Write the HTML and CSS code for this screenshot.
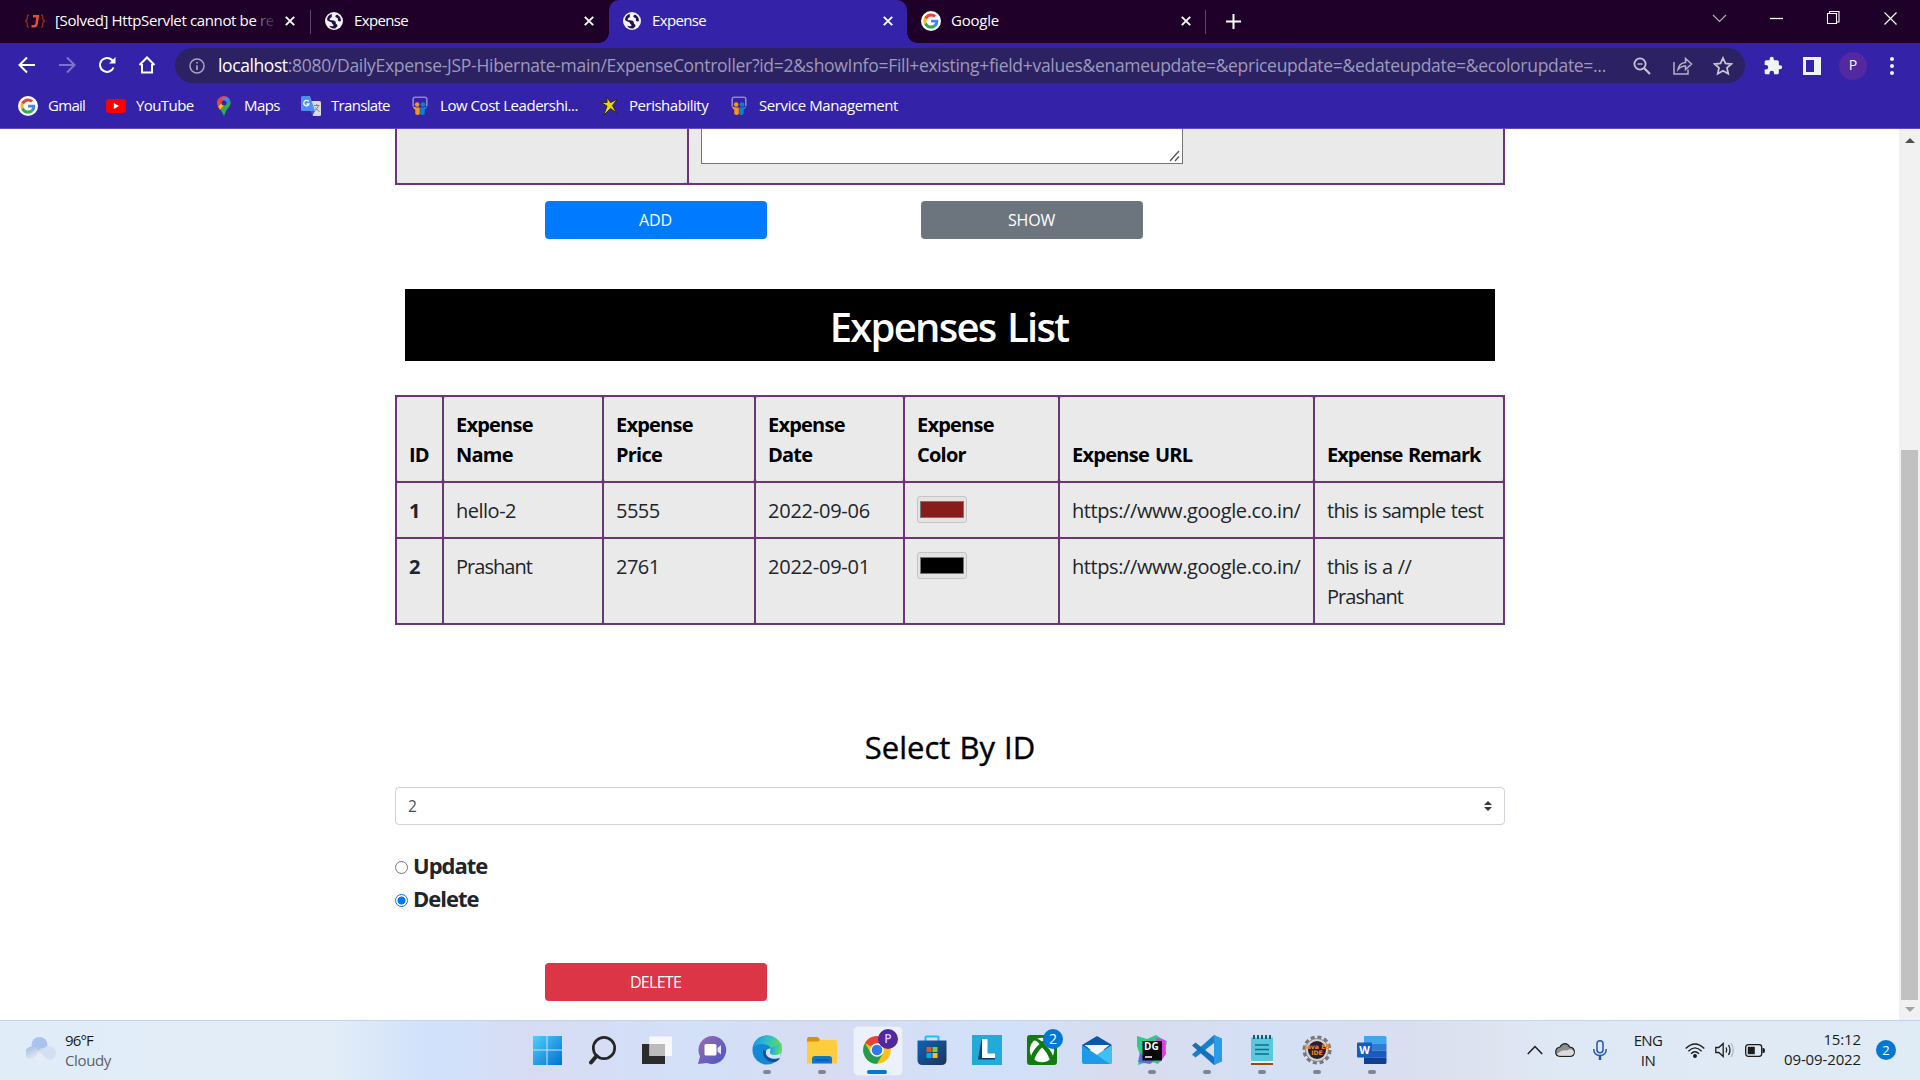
FILE: index.html
```html
<!DOCTYPE html>
<html lang="en">
<head>
<meta charset="utf-8">
<title>Expense</title>
<link rel="stylesheet" href="styles.css">
</head>
<body>
<svg class="defs" width="0" height="0" aria-hidden="true">
  <symbol id="google" viewBox="0 0 20 20"><circle cx="10" cy="10" r="10" fill="#fff"/><g transform="translate(2.4 2.4) scale(.317)"><path fill="#EA4335" d="M24 9.5c3.54 0 6.71 1.22 9.21 3.6l6.85-6.85C35.9 2.38 30.47 0 24 0 14.62 0 6.51 5.38 2.56 13.22l7.98 6.19C12.43 13.72 17.74 9.5 24 9.5z"/><path fill="#4285F4" d="M46.98 24.55c0-1.57-.15-3.09-.38-4.55H24v9.02h12.94c-.58 2.96-2.26 5.48-4.78 7.18l7.73 6c4.51-4.18 7.09-10.36 7.09-17.65z"/><path fill="#FBBC05" d="M10.53 28.59c-.48-1.45-.76-2.99-.76-4.59s.27-3.14.76-4.59l-7.98-6.19C.92 16.46 0 20.12 0 24c0 3.88.92 7.54 2.56 10.78l7.97-6.19z"/><path fill="#34A853" d="M24 48c6.48 0 11.93-2.13 15.89-5.81l-7.73-6c-2.15 1.45-4.92 2.3-8.16 2.3-6.26 0-11.57-4.22-13.47-9.91l-7.98 6.19C6.51 42.62 14.62 48 24 48z"/></g></symbol>
  <symbol id="globe" viewBox="0 0 18 18"><circle cx="9" cy="9" r="9" fill="#f1f3f4"/><path class="globe-land" d="M7 1.8C6.2 3.500 7.500 4 6.500 5.300 5.600 6.300 4.700 6 4.600 7.300c0 1.300 2 1 3.800 1.200 2 .2 2.200 1.200 2.300 2.300.1 1.700 2 1.300 1.700 3.100-.2 1-1.500 1.600-2.100 2.500-3 .6-5.400-1-6-2.600 1.500.6 4.300.8 4.200-.6-.1-1.200-1.400-1-1.600-2.300C6.700 9.700 4 9.800 2 8 2 5 4 2.600 7 1.800zM12 2.500c2.500 1.300 4 3.600 4 6.300-.8 1.200-2.400 1-3-.2-.5-1 .4-1.900-.4-2.700-.8-.7-2-.3-2.200-1.500-.1-.9.900-1.200 1.600-1.900z"/></symbol>
  <symbol id="close" viewBox="0 0 10 10"><path d="M.8.8l8.400 8.400M9.200.8L.8 9.200" fill="none" stroke="#fff" stroke-width="1.900"/></symbol>
  <symbol id="slides" viewBox="0 0 16 20"><path d="M1.200 10V3Q1.200 1.200 3 1.200H13q1.800 0 1.800 1.800v7" fill="none" stroke="#8d86c4" stroke-width="1.600"/><circle cx="5.200" cy="8.500" r="2.300" fill="#f7941e"/><circle cx="11" cy="8.500" r="2.300" fill="#0a84c6"/><path d="M.5 9.500c2 2 4 2 7.300 2V18q-2 2-4.500 0V14Q1 12.500.5 9.500z" fill="#f7941e"/><path d="M15.500 9.500c-2 2-4 2-7.300 2V18q2 2 4.500 0V14q2.300-1.500 2.800-4.500z" fill="#0a84c6"/></symbol>
</svg>

<header class="tabs">
  <div class="tab tab-first">
    <svg class="fav-j" viewBox="0 0 20 14"><g fill="none"><path d="M4 1Q2 1 2.300 3.500T.6 7q2 .6 1.700 3.500T4 13M16 1q2 0 1.700 2.500T19.400 7q-2 .6-1.700 3.500T16 13" stroke="#8c2a22" stroke-width="1.400"/><path d="M8 2.200H12.800L11.500 10q-.5 2.200-2.500 2.200H6.500" stroke="#e4502e" stroke-width="2.600"/></g></svg>
    <span class="tab-title tab-title-long">[Solved] HttpServlet cannot be <span class="fade">re</span></span>
    <svg class="x"><use href="#close"/></svg>
  </div>
  <div class="tab">
    <svg class="fav"><use href="#globe"/></svg><span class="tab-title">Expense</span><svg class="x"><use href="#close"/></svg>
  </div>
  <div class="tab active">
    <svg class="fav"><use href="#globe"/></svg><span class="tab-title">Expense</span><svg class="x"><use href="#close"/></svg>
  </div>
  <div class="tab tab-last">
    <svg class="fav-g"><use href="#google"/></svg><span class="tab-title google-title">Google</span><svg class="x"><use href="#close"/></svg>
  </div>
  <svg class="plus" viewBox="0 0 15 15"><path d="M7.500 0v15M0 7.500h15" stroke="#fff" stroke-width="2"/></svg>
  <svg class="window-controls" viewBox="0 0 190 16" fill="none" stroke="#fff"><path d="M2 5l6.500 6.500L15 5" stroke="#b9a9bf" stroke-width="1.200"/><path d="M59 8.500h13" stroke-width="1.300"/><path d="M116.500 3.500h9v10h-9zM118.500 3.500v-2h9.500v10.500h-2.500" stroke-width="1.100"/><path d="M173.500 2.500l12 12M185.500 2.500l-12 12" stroke-width="1.200"/></svg>
</header>

<nav class="toolbar">
  <div class="nav-icons">
    <svg viewBox="0 0 18 18"><path d="M17 9H2M9 1.500L1.500 9 9 16.500" /></svg>
    <svg viewBox="0 0 18 18" class="dim"><path d="M1 9h15M9 1.500L16.500 9 9 16.500"/></svg>
    <svg viewBox="0 0 18 18"><path d="M15.500 11.500A7 7 0 1 1 14 4l1.800 1.800"/><path d="M17.500 1v6.500H11z" fill="#fff" stroke="none"/></svg>
    <svg viewBox="0 0 18 18"><path d="M1.500 9L9 1.500 16.500 9M4 8v8.500h10V8"/></svg>
  </div>
  <div class="omnibox">
    <svg class="info" viewBox="0 0 16 16" fill="none" stroke="#a8a4bd" stroke-width="1.500"><circle cx="8" cy="8" r="7"/><path d="M8 7.200V12M8 4v1.600" stroke-width="1.700"/></svg>
    <div class="url"><b>localhost</b><span>:8080/DailyExpense-JSP-Hibernate-main/ExpenseController?id=2&amp;showInfo=Fill+existing+field+values&amp;enameupdate=&amp;epriceupdate=&amp;edateupdate=&amp;ecolorupdate=...</span></div>
    <svg class="zoom-out" viewBox="0 0 18 18" fill="none" stroke="#c6c4cf" stroke-width="1.800"><circle cx="7" cy="7" r="5.600"/><path d="M11 11l6 6" stroke-width="2.200"/><path d="M4.500 7h5" stroke-width="1.400"/></svg>
    <svg class="share" viewBox="0 0 20 18" fill="none" stroke="#b5b2c4" stroke-width="1.500"><path d="M1 5v12h14v-4.500"/><path d="M5 12.500Q6 6 12.500 5.500V1.500L18.500 7l-6 5.500V9Q8 9 5 12.500z"/></svg>
    <svg class="star" viewBox="0 0 18 18" fill="none" stroke="#c6c4cf" stroke-width="1.600"><path d="M9 1.800l2.200 4.800 5.300.6-3.900 3.500 1.100 5.200L9 13.200l-4.700 2.700 1.100-5.200L1.500 7.200l5.300-.6z"/></svg>
  </div>
  <svg class="ext" viewBox="0 0 24 24" fill="#f1f3f4"><path d="M20.500 11H19V7c0-1.100-.9-2-2-2h-4V3.500a2.500 2.500 0 0 0-5 0V5H4c-1.100 0-2 .9-2 2v3.800h1.500a2.700 2.700 0 0 1 0 5.400H2V20c0 1.100.9 2 2 2h3.800v-1.500a2.700 2.700 0 0 1 5.400 0V22H17c1.100 0 2-.9 2-2v-4h1.500a2.500 2.500 0 0 0 0-5z"/></svg>
  <svg class="panel" viewBox="0 0 18 18"><path d="M1.500 1.500h15v15h-15z" fill="none" stroke="#f1f3f4" stroke-width="3"/><path d="M11 1h6v16h-6z" fill="#f1f3f4"/></svg>
  <div class="profile">P</div>
  <svg class="kebab" viewBox="0 0 4 18" fill="#f1f3f4"><circle cx="2" cy="2" r="2"/><circle cx="2" cy="9" r="2"/><circle cx="2" cy="16" r="2"/></svg>
</nav>

<nav class="bookmarks">
  <a class="bm bm-gmail"><svg width="20" height="20"><use href="#google"/></svg><span>Gmail</span></a>
  <a class="bm bm-yt"><svg width="20" height="14" viewBox="0 0 20 14"><rect width="20" height="14" rx="3.500" fill="#f00"/><path d="M7.800 4v6L13 7z" fill="#fff"/></svg><span>YouTube</span></a>
  <a class="bm bm-maps"><svg width="14" height="20" viewBox="0 0 14 20"><path d="M7 0a7 7 0 0 0-5.400 2.500L7 7z" fill="#ea4335"/><path d="M1.600 2.500A7 7 0 0 0 1 10.500L10.500 1Q8.800 0 7 0z" fill="#ea4335"/><path d="M5 1.500L10 .7A7 7 0 0 1 13 4L7.500 9z" fill="#4285f4"/><path d="M1 10.500L5 6.500l3 2.500-5 5z" fill="#fbbc04"/><path d="M13 4c2 4.500-1 7-3 9.500-1.700 2.300-1.700 4-3 6.500-1.300-2.500-1.300-3.500-4-6.500z" fill="#34a853"/><circle cx="7" cy="7" r="2.500" fill="#3423a8"/></svg><span>Maps</span></a>
  <a class="bm bm-tr"><svg width="20" height="20" viewBox="0 0 20 20"><path d="M8 5h10.500q1.500 0 1.500 1.500V19q0 1-1.500 1H12z" fill="#d9dce3"/><path d="M1.500 0H9l5 15H1.500Q0 15 0 13.500v-12Q0 0 1.500 0z" fill="#4f8df5"/><path d="M9.500 15H14l-2.500 4.500z" fill="#2b5fc0"/><path d="M7.600 5.500A2.700 2.700 0 1 0 8 8H5.500" fill="none" stroke-width="1.300" stroke="#fff"/><path d="M13 9.500h5.500M15.700 8v1.500M17.500 9.500q-1 3.500-3.500 5M14.500 11.500q1.500 3 4 4" fill="none" stroke="#7a8290"/></svg><span>Translate</span></a>
  <a class="bm bm-low"><svg width="16" height="20"><use href="#slides"/></svg><span>Low Cost Leadershi...</span></a>
  <a class="bm bm-per"><svg width="18" height="20" viewBox="0 0 18 20"><path d="M7 1l3.500 5.500L17.500 3 12.500 9.500l4 7.500-6-4.500L3.500 19.500l3.500-9.500L.5 6.200l6.500.3z" fill="#e8d413" stroke="#2d260c" stroke-width="1"/></svg><span>Perishability</span></a>
  <a class="bm bm-ser"><svg width="16" height="20"><use href="#slides"/></svg><span>Service Management</span></a>
</nav>

<div class="viewport">
  <main class="page">
    <div class="form-tail">
      <div class="form-label"></div>
      <div class="form-field"><div class="textarea"><svg viewBox="0 0 12 12"><path d="M1 11L10 1M6 11l4-4.500" stroke="#555" stroke-width="1.300"/></svg></div></div>
    </div>
    <div class="actions"><button class="btn primary">ADD</button><button class="btn secondary">SHOW</button></div>
    <h1>Expenses List</h1>
    <table>
      <colgroup><col class="c1"><col class="c2"><col class="c3"><col class="c4"><col class="c5"><col class="c6"><col class="c7"></colgroup>
      <thead><tr><th>ID</th><th>Expense<br>Name</th><th>Expense<br>Price</th><th>Expense<br>Date</th><th>Expense<br>Color</th><th>Expense URL</th><th>Expense Remark</th></tr></thead>
      <tbody>
        <tr><th>1</th><td>hello-2</td><td>5555</td><td class="num">2022-09-06</td><td><div class="color"><i class="red"></i></div></td><td class="link">https://www.google.co.in/</td><td>this is sample test</td></tr>
        <tr><th>2</th><td class="name">Prashant</td><td>2761</td><td class="num">2022-09-01</td><td><div class="color"><i class="black"></i></div></td><td class="link">https://www.google.co.in/</td><td>this is a //<br><span class="name">Prashant</span></td></tr>
      </tbody>
    </table>
    <h2>Select By ID</h2>
    <div class="select"><span>2</span><svg viewBox="0 0 8 10" width="8" height="10"><path d="M4 0l4 4H0zM4 10L0 6h8z" fill="#343a40"/></svg></div>
    <div class="radios">
      <label><i class="radio"></i><span>Update</span></label>
      <label><i class="radio on"></i><span>Delete</span></label>
    </div>
    <button class="btn danger">DELETE</button>
  </main>
  <div class="scrollbar">
    <svg viewBox="0 0 10 5"><path d="M5 0l5 5H0z" fill="#505050"/></svg>
    <div class="thumb"></div>
    <svg viewBox="0 0 10 5"><path d="M0 0h10L5 5z" fill="#a3a3a3"/></svg>
  </div>
</div>

<footer class="taskbar">
  <div class="weather">
    <svg width="30" height="24" viewBox="0 0 30 24"><defs><linearGradient id="cl" x1="0" y1="0" x2="1" y2="1"><stop offset="0" stop-color="#9fb9e0"/><stop offset=".7" stop-color="#eceff8"/></linearGradient></defs><circle cx="13.500" cy="8" r="8" fill="#aac3ec"/><path d="M6 9.500a6 6 0 0 1 6 4 6.500 6.500 0 1 1 11.500 9.500H6a6.700 6.700 0 0 1 0-13.500z" fill="url(#cl)"/><circle cx="23" cy="16" r="7" fill="#d3dff3"/><path d="M12 15q3 0 5 3 2 3 6 5H8z" fill="#e6ecf7"/></svg>
    <div><div class="temp">96°F</div><div class="sky">Cloudy</div></div>
  </div>

  <div class="apps">
    <div class="app"><svg viewBox="0 0 30 30"><defs><linearGradient id="wn" x1="0" y1="0" x2="1" y2="1"><stop offset="0" stop-color="#4fd0fb"/><stop offset="1" stop-color="#0070d2"/></linearGradient></defs><path d="M1 1h13.500v13.500H1zM15.500 1H30v13.500H15.500zM1 15.500h13.500V30H1zM15.500 15.500H30V30H15.500z" fill="url(#wn)"/></svg></div>
    <div class="app"><svg viewBox="0 0 30 30" fill="none" stroke="#262626"><circle cx="17" cy="13" r="10.700" stroke-width="2.700"/><path d="M9.500 21L4 27.500" stroke-width="4" stroke-linecap="round"/></svg></div>
    <div class="app"><svg viewBox="0 0 30 30"><path d="M0 9h23v20H0z" fill="#2c2c2c"/><path d="M7.500 1.500H30V21H7.500z" fill="#f8f8f8"/><path d="M7.500 9H23v12H7.500z" fill="#bcbcbc"/></svg></div>
    <div class="app"><svg viewBox="0 0 30 30"><defs><linearGradient id="ch" x1="0" y1="0" x2="1" y2="1"><stop offset="0" stop-color="#9a6cae"/><stop offset="1" stop-color="#4a55c8"/></linearGradient></defs><path d="M15 1a14 14 0 1 1-5 27l-9 1 2-7.500A14 14 0 0 1 15 1z" fill="url(#ch)"/><rect x="7.500" y="9" width="12" height="11.500" rx="1.500" fill="#fff"/><path d="M20.500 13l3.500-3v9.500l-3.500-3z" fill="#e6e2ff"/></svg></div>
    <div class="app run"><svg viewBox="0 0 30 30"><defs><linearGradient id="ed" x1="0" y1="0" x2="1" y2=".3"><stop offset="0" stop-color="#1b8fd6"/><stop offset=".5" stop-color="#2bbdd0"/><stop offset="1" stop-color="#62dc4f"/></linearGradient></defs><circle cx="15" cy="15" r="14.500" fill="#1388d8"/><path d="M.5 13C2 5 8 .5 15 .5c8 0 15 6 15 13 0 4-3 6.500-7 6.500-3 0-5-1-5-2.500 0-1 1-1.500 1-3 0-2.500-2-4.500-5-5C9 8.500 3 9 .5 13z" fill="url(#ed)"/><path d="M11 15c-1 7 5 13 12 12 2-.5 4-2 5-4-6 3-14 0-13.500-7z" fill="#11509a"/><path d="M18 17.500c0 1.500 2 2.500 5 2.500 2.500 0 4.500-1 6-2.500l-1 5q-6 2.500-11 0-4-2.500-3-6.500 1-3 4.500-2.500 1 1.500-.5 4z" fill="#d5e2f9"/><path d="M18 17.500c0 1.500 2 2.500 5 2.500 3 0 5.500-1.500 6.500-4V8L19 13z" fill="url(#ed)"/></svg></div>
    <div class="app run"><svg viewBox="0 0 30 30"><path d="M0 4q0-2 2-2h8.500L13 4.500V8H0z" fill="#d79208"/><path d="M0 6.500h11l2-1.500h15q2 0 2 2v21.500H0z" fill="#fdcc3f"/><path d="M5 28.500V24q0-3 3-3h14q3 0 3 3v4.500z" fill="#0f76c8"/><path d="M8.500 25h13" stroke="#084d90" stroke-width="1.200"/></svg></div>
    <div class="app chrome"><svg viewBox="0 0 30 30"><circle cx="15" cy="15" r="13.800" fill="#fbc116"/><path d="M15 15L3 8.100A13.800 13.800 0 0 1 27 8.100H15z" fill="#e94435"/><path d="M3 8.100A13.800 13.800 0 0 0 15 28.800l6-10.300-12-.1z" fill="#249c4f"/><circle cx="15" cy="15" r="6.800" fill="#fff"/><circle cx="15" cy="15" r="5.300" fill="#3178e8"/></svg><b class="badge badge-p">P</b></div>
    <div class="app"><svg viewBox="0 0 30 30"><defs><linearGradient id="st" x1="0" y1="0" x2="1" y2="1"><stop offset="0" stop-color="#0d64b8"/><stop offset="1" stop-color="#203158"/></linearGradient></defs><path d="M8.500 6.500v-4q0-1 1-1h11q1 0 1 1v4" fill="none" stroke="#22bdf3" stroke-width="2"/><path d="M.5 5.500h29V25q0 5-5 5h-19q-5 0-5-5z" fill="url(#st)"/><path d="M9.500 12H14.500v5h-5z" fill="#f1511b"/><path d="M15.500 12h5v5h-5z" fill="#80cc28"/><path d="M9.500 18h5v5h-5z" fill="#00adef"/><path d="M15.500 18h5v5h-5z" fill="#fbbc09"/></svg></div>
    <div class="app"><svg viewBox="0 0 30 30"><path d="M0 0h30v30H0z" fill="#22aad8"/><path d="M9.500 4L6 24.500l17 0V20l-11 1z" fill="#0a3e73"/><path d="M10 4h5.500v14.500H23V23H10z" fill="#fff"/></svg></div>
    <div class="app"><svg viewBox="0 0 30 30"><rect width="30" height="30" rx="3" fill="#107c10"/><circle cx="15" cy="15" r="12.200" fill="#fff"/><path d="M8 3.500Q12 3.500 15 6.500q3-3 7-3l2 1.500Q20 5.500 17.500 9 24 15 26 21q-1 3-3 4Q20 17 15 12.500 10 17 7 25q-2-1-3-4Q6 15 12.500 9 10 5.500 6 5z" fill="#107c10"/></svg><b class="badge">2</b></div>
    <div class="app"><svg viewBox="0 0 30 30"><path d="M0 10L15 1l15 9v5H0z" fill="#0c58a8"/><path d="M2.500 10h25L15 20z" fill="#f5f5f5"/><path d="M0 10l15 10L30 10v17q0 2-2 2H2q-2 0-2-2z" fill="#1c9be8"/><path d="M30 10v17q0 2-2 2L13 18.700l2 1.300z" fill="#3fc1f5"/></svg></div>
    <div class="app run"><svg viewBox="0 0 30 30"><path d="M0 1l10 3 9-4 8 5 3 1-3 16-6 7-8-3-12 4 2-10-3-9z" fill="#2fc98a"/><path d="M19 3l9 2 1 14-6 8z" fill="#d63fe0"/><path d="M1 27l2-9 14 8-4 3z" fill="#5b6fe0"/><path d="M5.500 6H25v19.500H5.500z" fill="#0a0a0a"/><text x="7" y="15" class="dg">DG</text><path d="M8 22h7" stroke="#fff" stroke-width="1.500"/></svg></div>
    <div class="app run"><svg viewBox="0 0 30 30"><path d="M22 0l8 3.500v23L22 30z" fill="#2a9be6"/><path d="M22 0v8L3.500 22.500 0 19.500z" fill="#1c7fca"/><path d="M22 30v-8L3.500 7.500 0 10.500z" fill="#1272bd"/><path d="M22 0l1.500.6v28.800L22 30z" fill="#2a9be6"/></svg></div>
    <div class="app run"><svg viewBox="0 0 30 30"><path d="M4 28h22v2H4z" fill="#9a4a10"/><path d="M4 2.500h22V26H4z" fill="#59c8dc"/><path d="M4 26h22v1.500H4z" fill="#fff"/><path d="M7 0v4M11 0v4M15 0v4M19 0v4M23 0v4" stroke="#0d5c7c" stroke-width="2"/><path d="M8 10h14M8 14.500h14M8 19h14" stroke="#0d6d90" stroke-width="1.500"/></svg></div>
    <div class="app run"><svg viewBox="0 0 30 30"><circle cx="15" cy="15" r="12.800" fill="none" stroke="#77777b" stroke-width="3.500" stroke-dasharray="4 2.700"/><circle cx="15" cy="15" r="11.500" fill="#d2d2d2" stroke="#777" stroke-width=".8"/><circle cx="15" cy="15" r="9" fill="#241f33"/><text x="15" y="14" class="ee">Java EE</text><text x="15" y="20" class="ee">IDE</text></svg></div>
    <div class="app run"><svg viewBox="0 0 30 30"><path d="M7 1h21q1.500 0 1.500 1.500V8.500H7z" fill="#41a5ee"/><path d="M7 8.500h22.500v7H7z" fill="#2b7cd3"/><path d="M7 15.500h22.500v7H7z" fill="#185abd"/><path d="M7 22.500h22.500v5q0 1.500-1.500 1.500H7z" fill="#103f91"/><rect y="7.500" width="15" height="15" rx="1" fill="#185abd"/><text x="7.500" y="19" class="wd">W</text></svg></div>
  </div>

  <div class="tray">
    <svg class="t-chev" viewBox="0 0 16 10"><path d="M.8 9L8 1.500 15.200 9" fill="none" stroke="#1c1c1c" stroke-width="1.500"/></svg>
    <svg class="t-cloud" viewBox="0 0 20 14"><path d="M5 4Q7 .7 10 .7T14.800 4.200Q19.300 4.500 19.300 9q0 4.300-4.300 4.300H5Q.7 13.300.7 9T5 4z" fill="#8e8e8e" stroke="#222" stroke-width="1.200"/><path d="M2 11q5-5 10-3.500 5-3 7 1.500-.5 3.800-4 3.800H5q-2 0-3-1.800z" fill="#dcdcdc"/></svg>
    <svg class="t-mic" viewBox="0 0 14 20" fill="none" stroke="#2158ae" stroke-width="1.500"><rect x="4" y=".8" width="6" height="12" rx="3"/><path d="M.8 9q0 6.500 6.200 6.500T13.200 9"/><path d="M7 15.500V20" stroke-width="2.500"/></svg>
    <div class="lang"><div>ENG</div><div>IN</div></div>
    <svg class="t-wifi" viewBox="0 0 20 15" fill="none" stroke="#1c1c1c" stroke-width="1.300"><path d="M.7 5.500Q10-3.500 19.300 5.500M3.400 8.200Q10 1.500 16.600 8.200M6 10.800q4-4 8 0"/><circle cx="10" cy="13" r="1.300" fill="#1c1c1c"/></svg>
    <svg class="t-vol" viewBox="0 0 20 16" fill="none" stroke="#1c1c1c" stroke-width="1.300"><path d="M.8 5.500v5h3l4.400 4V1.500l-4.400 4z"/><path d="M11 5.500q1.500 2.500 0 5M13.500 3q3 5 0 10"/><path d="M16 1q4.500 7 0 14" stroke="#adb8c4"/></svg>
    <svg class="t-bat" viewBox="0 0 20 13"><rect x=".7" y=".7" width="16" height="11.600" rx="2.500" fill="none" stroke="#1c1c1c" stroke-width="1.300"/><path d="M2.800 2.800h7v7.400h-7z" fill="#1c1c1c"/><path d="M17.500 4h1q1.500 0 1.500 2.500T18.500 9h-1z" fill="#1c1c1c"/></svg>
    <div class="clock"><div>15:12</div><div>09-09-2022</div></div>
    <div class="notif">2</div>
  </div>
</footer>
</body>
</html>
```
FILE: styles.css
```css
* { box-sizing: border-box; }
body { margin: 0; width: 1920px; height: 1080px; overflow: hidden; display: flex; flex-direction: column; background: #fff; font-family: "Open Sans", "Noto Sans", sans-serif; color: #212529; }
svg { display: block; flex: none; }
.defs { position: absolute; }

.tabs { height: 43px; flex: none; display: flex; align-items: center; background: #1e0029; color: #fff; }
.tab { width: 298px; height: 43px; display: flex; align-items: center; padding: 0 15px 2px 15px; font-size: 15px; white-space: nowrap; }
.tab-first { width: 311px; padding: 0 16px 2px 25px; background: linear-gradient(#5c4666, #5c4666) right 10px / 1px 24px no-repeat; }
.tab-last { width: 299px; padding: 0 15px 2px 14px; background: linear-gradient(#5c4666, #5c4666) right 10px / 1px 24px no-repeat; }
.tab-first + .tab { padding-left: 14px; }
.tab.active { position: relative; background: #3423a8; border-radius: 10px 10px 0 0; padding: 0 14px 2px; }
.tab.active::before, .tab.active::after { content: ""; position: absolute; bottom: 0; width: 10px; height: 10px; }
.tab.active::before { left: -10px; background: radial-gradient(circle at 0 0, transparent 9.500px, #3423a8 10px); }
.tab.active::after { right: -10px; background: radial-gradient(circle at 100% 0, transparent 9.500px, #3423a8 10px); }
.fav { width: 18px; height: 18px; margin-right: 11px; }
.fav-g { width: 20px; height: 20px; margin-right: 10px; }
.fav-j { width: 20px; height: 14px; margin-right: 10px; }
.globe-land { fill: #241048; }
.tab-title { flex: 1; overflow: hidden; letter-spacing: -.65px; padding-bottom: 2px; }
.tab-title-long { letter-spacing: -.36px; }
.google-title { letter-spacing: -.22px; }
.fade { background: linear-gradient(90deg, #8d7f94, #3a2343); background-clip: text; color: transparent; }
.x { width: 10px; height: 10px; }
.plus { width: 15px; height: 15px; margin-left: 20px; }
.window-controls { width: 190px; height: 16px; margin: 0 19px 7px auto; }

.toolbar { height: 45px; flex: none; display: flex; align-items: center; background: #3423a8; }
.nav-icons { display: flex; gap: 22px; padding: 0 0 1px 18px; width: 175px; fill: none; stroke: #fff; stroke-width: 2; }
.nav-icons svg { width: 18px; height: 18px; }
.nav-icons .dim { stroke: #7e73c8; }
.omnibox { width: 1570px; height: 35px; border-radius: 18px; background: #2c2263; display: flex; align-items: center; padding-left: 14px; }
.info { width: 16px; height: 16px; }
.url { width: 1415px; flex: none; margin: -2px 0 0 13px; font-size: 17.500px; line-height: 24px; color: #9d99ba; white-space: nowrap; letter-spacing: -.295px; }
.url b { font-weight: 400; color: #fff; letter-spacing: -.4px; }
.zoom-out { width: 18px; height: 18px; }
.share { width: 20px; height: 18px; margin-left: 22px; }
.star { width: 20px; height: 20px; margin-left: 20px; }
.ext { width: 20px; height: 20px; margin-left: 18px; }
.panel { width: 18px; height: 18px; margin-left: 20px; }
.profile { width: 28px; height: 28px; border-radius: 50%; background: #5428a0; color: #fff; font-size: 14px; line-height: 26px; text-align: center; margin-left: 18px; }
.kebab { width: 4px; height: 18px; margin-left: 23px; }

.bookmarks { height: 41px; flex: none; display: flex; align-items: center; background: #3423a8; border-bottom: 1px solid #5e4db8; padding: 0 0 5px 18px; color: #fff; font-size: 15px; }
.bm { display: flex; align-items: center; white-space: nowrap; }
.bm svg { margin-right: 10px; }
.bm span { padding-bottom: 2px; }
.bm-gmail { width: 88px; letter-spacing: -.7px; }
.bm-yt { width: 111px; letter-spacing: -.58px; }
.bm-maps { width: 84px; letter-spacing: -.6px; }
.bm-maps svg { margin-right: 13px; }
.bm-tr { width: 111px; letter-spacing: -.68px; }
.bm-tr svg { margin-right: 10px; }
.bm-low { width: 188px; letter-spacing: -.45px; }
.bm-low svg, .bm-ser svg { margin-right: 12px; }
.bm-per { width: 131px; letter-spacing: -.48px; }
.bm-per svg { margin-right: 11px; }
.bm-ser { letter-spacing: -.41px; }

.viewport { height: 891px; flex: none; display: flex; justify-content: space-between; padding-left: 395px; }
.page { width: 1110px; display: flex; flex-direction: column; }
.form-tail { height: 56px; display: flex; border: 2px solid #6b3674; border-top: 0; background: #dcd0ff; }
.form-label { width: 290px; background: #eaeaea; border-radius: 0 0 5px 5px; }
.form-field { flex: 1; position: relative; margin-left: 2px; background: #eaeaea; border-radius: 0 0 5px 5px; padding-left: 12px; }
.form-field::before { content: ""; position: absolute; left: -2px; top: 0; width: 2px; height: 100%; background: #6b3674; }
.textarea { width: 482px; height: 35px; border: 1px solid #767676; border-top: 0; background: #fff; display: flex; align-items: flex-end; justify-content: flex-end; padding: 0 1px 1px; }
.textarea svg { width: 12px; height: 12px; }
.btn { width: 222px; height: 38px; border: 0; border-radius: 4px; color: #fff; font: 400 16px "Open Sans", sans-serif; letter-spacing: -.15px; padding: 0 1px 1px 0; }
.actions { display: flex; gap: 154px; padding: 16px 0 50px 150px; }
.primary { background: #007bff; }
.secondary { background: #6c757d; }
.danger { background: #dc3545; letter-spacing: -.7px; margin: 47px 0 0 150px; }
h1 { margin: 0 10px 34px; height: 72px; background: #000; color: #fff; font-size: 40px; font-weight: 600; line-height: 75px; letter-spacing: -1.750px; word-spacing: 3px; text-align: center; padding-right: 2px; }

table { width: 1110px; height: 230px; border-collapse: collapse; table-layout: fixed; background: #dcd0ff; font-size: 20px; line-height: 30px; }
.c1 { width: 47px; }
.c2 { width: 160px; }
.c3 { width: 152px; }
.c4 { width: 149px; }
.c5 { width: 155px; }
.c6 { width: 255px; }
.c7 { width: 190px; }
th, td { border: 2px solid #6b3674; border-radius: 6px; background: #eaeaea; padding: 13px 0 11px 12px; text-align: left; vertical-align: top; white-space: nowrap; letter-spacing: -.69px; word-spacing: .8px; }
tbody tr:first-child td, tbody tr:first-child th { height: 56px; padding-bottom: 10px; }
tbody td:nth-child(2), tbody td:nth-child(3) { letter-spacing: -.5px; }
th { font-weight: 700; letter-spacing: -.7px; }
thead th { vertical-align: bottom; color: #000; box-shadow: 0 0 0 1px #b3abbd; letter-spacing: -.78px; }
thead th:nth-child(6) { letter-spacing: -.74px; word-spacing: 1.500px; }
thead th:last-child { letter-spacing: -.97px; word-spacing: 1.500px; }
.num { letter-spacing: -.24px; }
.link { letter-spacing: -.41px; }
tbody td.name, .name { letter-spacing: -.95px; }
.color { width: 50px; height: 27px; border: 1px solid #c4c4c4; border-radius: 3px; background: #e3e3e3; padding: 4px 2px; }
.color i { display: block; height: 17px; border: 1px solid #777; }
.red { background: #871c1c; }
.black { background: #000; }

h2 { margin: 99px 0 0; height: 63px; font-size: 31px; font-weight: 500; line-height: 46px; letter-spacing: 0; word-spacing: 1px; text-align: center; color: #000; -webkit-text-stroke: .4px #000; }
.select { height: 38px; border: 1px solid #ced4da; border-radius: 4px; display: flex; justify-content: space-between; align-items: center; padding: 0 12px; font-size: 15.500px; color: #495057; }
.radios { margin-top: 25px; font-size: 22px; font-weight: 700; line-height: 33px; letter-spacing: -1px; }
.radios label { display: flex; align-items: center; height: 33px; }
.radios span { padding-bottom: 2px; }
.radio { width: 13px; height: 13px; border: 1px solid #767676; border-radius: 50%; margin: 2px 5px 0 0; background: #fff; }
.radio.on { border: 1.500px solid #0075ff; background: radial-gradient(circle, #0075ff 3.700px, #fff 4.300px); }

.scrollbar { width: 21px; background: #f1f1f1; display: flex; flex-direction: column; align-items: center; padding: 9px 0; }
.scrollbar svg { width: 10px; height: 5px; }
.thumb { flex: none; width: 17px; height: 550px; margin: 307px 0 7px; background: #c1c1c1; }

.taskbar { height: 60px; flex: none; display: flex; align-items: flex-start; border-top: 1px solid #c8d4e6; background: linear-gradient(90deg, #e0ecf7 0, #e2edf7 330px, #d0e1fb 430px, #d7dcf4 530px, #d2e0f8 700px, #d7dcf2 830px, #d1e1fa 1000px, #d8dced 1130px, #d4e0f5 1270px, #dadff0 1400px, #dee3f0 1490px, #dfe9f6 1560px, #dfebf5 1920px); font-size: 15px; }
.weather { width: 519px; height: 57px; display: flex; align-items: center; padding-left: 26px; gap: 9px; line-height: 20px; }
.weather svg { margin-bottom: 2px; }
.temp { color: #1b1b1b; letter-spacing: -.83px; }
.sky { color: #5c6167; letter-spacing: -.36px; }
.apps { display: flex; }
.app { width: 55px; height: 58px; display: flex; align-items: center; justify-content: center; position: relative; }
.app > svg { width: 30px; height: 30px; }
.run::after, .chrome::after { content: ""; position: absolute; left: 24px; top: 49px; width: 8px; height: 4px; border-radius: 2px; background: #7f8692; }
.chrome::before { content: ""; position: absolute; left: 4px; top: 5px; width: 48px; height: 48px; border-radius: 5px; background: #edf1fb; border: 1px solid #e0e5f2; }
.chrome > svg { position: relative; }
.chrome::after { left: 18px; width: 20px; background: #0078d4; }
.badge { position: absolute; left: 29px; top: 8px; width: 20px; height: 20px; border-radius: 50%; background: #0078d4; color: #fff; font-size: 14px; font-weight: 400; line-height: 20px; text-align: center; }
.badge-p { background: #51279f; font-size: 12px; font-weight: 600; color: #d8cdf0; }
.dg { font: 700 10px "Open Sans", sans-serif; fill: #fff; }
.ee { font: 700 6.200px "DejaVu Sans", sans-serif; fill: #f08a1d; text-anchor: middle; }
.wd { font: 700 11px "Open Sans", sans-serif; fill: #fff; text-anchor: middle; }

.tray { height: 58px; display: flex; align-items: center; padding-left: 128px; color: #1b1b1b; line-height: 20px; }
.t-chev { width: 16px; height: 10px; }
.t-cloud { width: 20px; height: 14px; margin-left: 12px; }
.t-mic { width: 14px; height: 20px; margin-left: 18px; }
.lang { width: 42px; margin: 0 0 1px 20px; text-align: center; letter-spacing: -.6px; }
.t-wifi { width: 20px; height: 15px; margin-left: 16px; }
.t-vol { width: 20px; height: 16px; margin-left: 10px; }
.t-bat { width: 20px; height: 13px; margin-left: 10px; }
.clock { width: 86px; margin: 0 0 2px 10px; text-align: right; letter-spacing: -.13px; }
.notif { width: 20px; height: 20px; margin-left: 15px; border-radius: 50%; background: #0078d4; color: #fff; font-size: 13px; line-height: 20px; text-align: center; }
```
